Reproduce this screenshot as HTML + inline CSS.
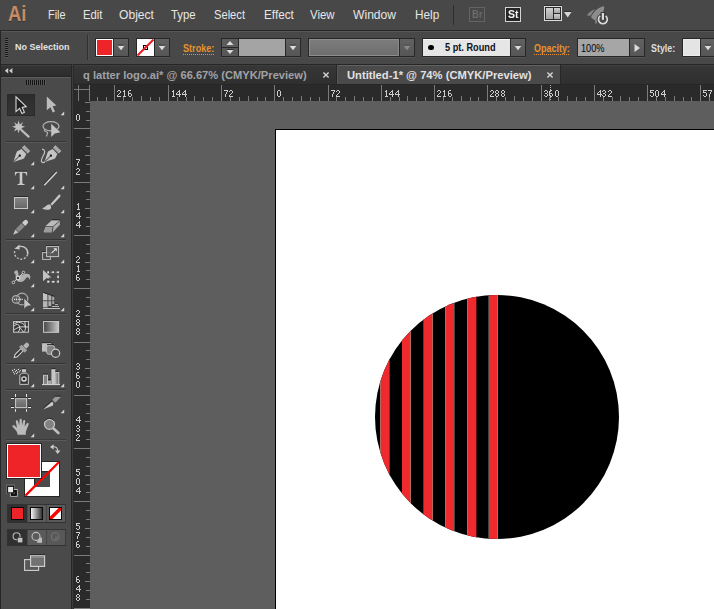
<!DOCTYPE html>
<html>
<head>
<meta charset="utf-8">
<title>Ai</title>
<style>
html,body{margin:0;padding:0;}
body{width:714px;height:609px;overflow:hidden;background:#5e5e5e;font-family:"Liberation Sans",sans-serif;position:relative;}
.abs{position:absolute;}
.t{position:absolute;white-space:nowrap;transform-origin:0 0;line-height:1;}
#menubar{left:0;top:0;width:714px;height:30px;background:#464646;}
#menuline{left:0;top:30px;width:714px;height:1px;background:#2e2e2e;}
#ctrlbar{left:0;top:31px;width:714px;height:32px;background:#474747;}
#ctrlline{left:0;top:63px;width:714px;height:1px;background:#2b2b2b;}
#tabbar{left:73px;top:64px;width:641px;height:21px;background:#3a3a3a;}
.menu{color:#e4e4e4;font-size:13px;top:8px;}
#toolbar{left:0;top:64px;width:71px;height:545px;background:#474747;}
#hruler{left:74px;top:85px;width:640px;height:16px;background:#2a2a2a;overflow:hidden;}
#vruler{left:74px;top:101px;width:16px;height:508px;background:#2a2a2a;overflow:hidden;}
.tk{position:absolute;background:#7c7c7c;}
.rl{position:absolute;will-change:transform;color:#d2d2d2;font-size:10.0px;line-height:9px;letter-spacing:-0.1px;white-space:nowrap;}
#canvas{left:90px;top:101px;width:624px;height:508px;background:#5e5e5e;overflow:hidden;}
#artboard{left:275px;top:129px;width:500px;height:600px;background:#fff;border:1px solid #000;box-sizing:border-box;}
</style>
</head>
<body>
<div class="abs" id="canvas"></div>
<div class="abs" id="artboard"></div>
<svg class="abs" style="left:0;top:0" width="714" height="609" viewBox="0 0 714 609">
  <defs><clipPath id="cc"><circle cx="497" cy="417" r="122"/></clipPath></defs>
  <circle cx="497" cy="417" r="122" fill="#000"/>
  <g clip-path="url(#cc)" fill="#ee2a2e" shape-rendering="crispEdges">
    <rect x="381" y="290" width="8" height="260"/>
    <rect x="402" y="290" width="8" height="260"/>
    <rect x="424" y="290" width="8" height="260"/>
    <rect x="446" y="290" width="8" height="260"/>
    <rect x="468" y="290" width="8" height="260"/>
    <rect x="489" y="290" width="8" height="260"/>
    <g fill="#b46a5a">
      <rect x="380" y="290" width="1" height="260"/>
      <rect x="410" y="290" width="1" height="260"/>
      <rect x="432" y="290" width="1" height="260"/>
      <rect x="445" y="290" width="1" height="260"/>
      <rect x="467" y="290" width="1" height="260"/>
      <rect x="497" y="290" width="1" height="260"/>
    </g>
    <g fill="#46443c">
      <rect x="389" y="290" width="1" height="260"/>
      <rect x="423" y="290" width="1" height="260"/>
      <rect x="454" y="290" width="1" height="260"/>
      <rect x="488" y="290" width="1" height="260"/>
    </g>
    <rect x="476" y="290" width="1" height="260" fill="#5a1012"/>
  </g>
</svg>
<div class="abs" id="hruler">
<div class="tk" style="left:5px;top:12px;width:1px;height:4px"></div>
<div class="tk" style="left:14px;top:11px;width:1px;height:5px"></div>
<div class="tk" style="left:23px;top:12px;width:1px;height:4px"></div>
<div class="tk" style="left:32px;top:12px;width:1px;height:4px"></div>
<div class="tk" style="left:40px;top:0;width:1px;height:16px"></div>
<div class="tk" style="left:49px;top:12px;width:1px;height:4px"></div>
<div class="tk" style="left:58px;top:12px;width:1px;height:4px"></div>
<div class="tk" style="left:67px;top:11px;width:1px;height:5px"></div>
<div class="tk" style="left:76px;top:12px;width:1px;height:4px"></div>
<div class="tk" style="left:85px;top:12px;width:1px;height:4px"></div>
<div class="tk" style="left:94px;top:0;width:1px;height:16px"></div>
<div class="tk" style="left:103px;top:12px;width:1px;height:4px"></div>
<div class="tk" style="left:112px;top:12px;width:1px;height:4px"></div>
<div class="tk" style="left:120px;top:11px;width:1px;height:5px"></div>
<div class="tk" style="left:129px;top:12px;width:1px;height:4px"></div>
<div class="tk" style="left:138px;top:12px;width:1px;height:4px"></div>
<div class="tk" style="left:147px;top:0;width:1px;height:16px"></div>
<div class="tk" style="left:156px;top:12px;width:1px;height:4px"></div>
<div class="tk" style="left:165px;top:12px;width:1px;height:4px"></div>
<div class="tk" style="left:174px;top:11px;width:1px;height:5px"></div>
<div class="tk" style="left:183px;top:12px;width:1px;height:4px"></div>
<div class="tk" style="left:191px;top:12px;width:1px;height:4px"></div>
<div class="tk" style="left:200px;top:0;width:1px;height:16px"></div>
<div class="tk" style="left:209px;top:12px;width:1px;height:4px"></div>
<div class="tk" style="left:218px;top:12px;width:1px;height:4px"></div>
<div class="tk" style="left:227px;top:11px;width:1px;height:5px"></div>
<div class="tk" style="left:236px;top:12px;width:1px;height:4px"></div>
<div class="tk" style="left:245px;top:12px;width:1px;height:4px"></div>
<div class="tk" style="left:254px;top:0;width:1px;height:16px"></div>
<div class="tk" style="left:262px;top:12px;width:1px;height:4px"></div>
<div class="tk" style="left:271px;top:12px;width:1px;height:4px"></div>
<div class="tk" style="left:280px;top:11px;width:1px;height:5px"></div>
<div class="tk" style="left:289px;top:12px;width:1px;height:4px"></div>
<div class="tk" style="left:298px;top:12px;width:1px;height:4px"></div>
<div class="tk" style="left:307px;top:0;width:1px;height:16px"></div>
<div class="tk" style="left:316px;top:12px;width:1px;height:4px"></div>
<div class="tk" style="left:325px;top:12px;width:1px;height:4px"></div>
<div class="tk" style="left:333px;top:11px;width:1px;height:5px"></div>
<div class="tk" style="left:342px;top:12px;width:1px;height:4px"></div>
<div class="tk" style="left:351px;top:12px;width:1px;height:4px"></div>
<div class="tk" style="left:360px;top:0;width:1px;height:16px"></div>
<div class="tk" style="left:369px;top:12px;width:1px;height:4px"></div>
<div class="tk" style="left:378px;top:12px;width:1px;height:4px"></div>
<div class="tk" style="left:387px;top:11px;width:1px;height:5px"></div>
<div class="tk" style="left:396px;top:12px;width:1px;height:4px"></div>
<div class="tk" style="left:404px;top:12px;width:1px;height:4px"></div>
<div class="tk" style="left:413px;top:0;width:1px;height:16px"></div>
<div class="tk" style="left:422px;top:12px;width:1px;height:4px"></div>
<div class="tk" style="left:431px;top:12px;width:1px;height:4px"></div>
<div class="tk" style="left:440px;top:11px;width:1px;height:5px"></div>
<div class="tk" style="left:449px;top:12px;width:1px;height:4px"></div>
<div class="tk" style="left:458px;top:12px;width:1px;height:4px"></div>
<div class="tk" style="left:467px;top:0;width:1px;height:16px"></div>
<div class="tk" style="left:475px;top:12px;width:1px;height:4px"></div>
<div class="tk" style="left:484px;top:12px;width:1px;height:4px"></div>
<div class="tk" style="left:493px;top:11px;width:1px;height:5px"></div>
<div class="tk" style="left:502px;top:12px;width:1px;height:4px"></div>
<div class="tk" style="left:511px;top:12px;width:1px;height:4px"></div>
<div class="tk" style="left:520px;top:0;width:1px;height:16px"></div>
<div class="tk" style="left:529px;top:12px;width:1px;height:4px"></div>
<div class="tk" style="left:538px;top:12px;width:1px;height:4px"></div>
<div class="tk" style="left:546px;top:11px;width:1px;height:5px"></div>
<div class="tk" style="left:555px;top:12px;width:1px;height:4px"></div>
<div class="tk" style="left:564px;top:12px;width:1px;height:4px"></div>
<div class="tk" style="left:573px;top:0;width:1px;height:16px"></div>
<div class="tk" style="left:582px;top:12px;width:1px;height:4px"></div>
<div class="tk" style="left:591px;top:12px;width:1px;height:4px"></div>
<div class="tk" style="left:600px;top:11px;width:1px;height:5px"></div>
<div class="tk" style="left:609px;top:12px;width:1px;height:4px"></div>
<div class="tk" style="left:617px;top:12px;width:1px;height:4px"></div>
<div class="tk" style="left:626px;top:0;width:1px;height:16px"></div>
<div class="tk" style="left:635px;top:12px;width:1px;height:4px"></div>
</div>
<div class="abs" id="vruler">
<div class="tk" style="top:1px;left:11px;height:1px;width:5px"></div>
<div class="tk" style="top:10px;left:12px;height:1px;width:4px"></div>
<div class="tk" style="top:19px;left:12px;height:1px;width:4px"></div>
<div class="tk" style="top:27px;left:0;height:1px;width:16px"></div>
<div class="tk" style="top:36px;left:12px;height:1px;width:4px"></div>
<div class="tk" style="top:45px;left:12px;height:1px;width:4px"></div>
<div class="tk" style="top:54px;left:11px;height:1px;width:5px"></div>
<div class="tk" style="top:63px;left:12px;height:1px;width:4px"></div>
<div class="tk" style="top:72px;left:12px;height:1px;width:4px"></div>
<div class="tk" style="top:81px;left:0;height:1px;width:16px"></div>
<div class="tk" style="top:90px;left:12px;height:1px;width:4px"></div>
<div class="tk" style="top:98px;left:12px;height:1px;width:4px"></div>
<div class="tk" style="top:107px;left:11px;height:1px;width:5px"></div>
<div class="tk" style="top:116px;left:12px;height:1px;width:4px"></div>
<div class="tk" style="top:125px;left:12px;height:1px;width:4px"></div>
<div class="tk" style="top:134px;left:0;height:1px;width:16px"></div>
<div class="tk" style="top:143px;left:12px;height:1px;width:4px"></div>
<div class="tk" style="top:152px;left:12px;height:1px;width:4px"></div>
<div class="tk" style="top:161px;left:11px;height:1px;width:5px"></div>
<div class="tk" style="top:169px;left:12px;height:1px;width:4px"></div>
<div class="tk" style="top:178px;left:12px;height:1px;width:4px"></div>
<div class="tk" style="top:187px;left:0;height:1px;width:16px"></div>
<div class="tk" style="top:196px;left:12px;height:1px;width:4px"></div>
<div class="tk" style="top:205px;left:12px;height:1px;width:4px"></div>
<div class="tk" style="top:214px;left:11px;height:1px;width:5px"></div>
<div class="tk" style="top:223px;left:12px;height:1px;width:4px"></div>
<div class="tk" style="top:232px;left:12px;height:1px;width:4px"></div>
<div class="tk" style="top:241px;left:0;height:1px;width:16px"></div>
<div class="tk" style="top:249px;left:12px;height:1px;width:4px"></div>
<div class="tk" style="top:258px;left:12px;height:1px;width:4px"></div>
<div class="tk" style="top:267px;left:11px;height:1px;width:5px"></div>
<div class="tk" style="top:276px;left:12px;height:1px;width:4px"></div>
<div class="tk" style="top:285px;left:12px;height:1px;width:4px"></div>
<div class="tk" style="top:294px;left:0;height:1px;width:16px"></div>
<div class="tk" style="top:303px;left:12px;height:1px;width:4px"></div>
<div class="tk" style="top:312px;left:12px;height:1px;width:4px"></div>
<div class="tk" style="top:320px;left:11px;height:1px;width:5px"></div>
<div class="tk" style="top:329px;left:12px;height:1px;width:4px"></div>
<div class="tk" style="top:338px;left:12px;height:1px;width:4px"></div>
<div class="tk" style="top:347px;left:0;height:1px;width:16px"></div>
<div class="tk" style="top:356px;left:12px;height:1px;width:4px"></div>
<div class="tk" style="top:365px;left:12px;height:1px;width:4px"></div>
<div class="tk" style="top:374px;left:11px;height:1px;width:5px"></div>
<div class="tk" style="top:383px;left:12px;height:1px;width:4px"></div>
<div class="tk" style="top:391px;left:12px;height:1px;width:4px"></div>
<div class="tk" style="top:400px;left:0;height:1px;width:16px"></div>
<div class="tk" style="top:409px;left:12px;height:1px;width:4px"></div>
<div class="tk" style="top:418px;left:12px;height:1px;width:4px"></div>
<div class="tk" style="top:427px;left:11px;height:1px;width:5px"></div>
<div class="tk" style="top:436px;left:12px;height:1px;width:4px"></div>
<div class="tk" style="top:445px;left:12px;height:1px;width:4px"></div>
<div class="tk" style="top:454px;left:0;height:1px;width:16px"></div>
<div class="tk" style="top:462px;left:12px;height:1px;width:4px"></div>
<div class="tk" style="top:471px;left:12px;height:1px;width:4px"></div>
<div class="tk" style="top:480px;left:11px;height:1px;width:5px"></div>
<div class="tk" style="top:489px;left:12px;height:1px;width:4px"></div>
<div class="tk" style="top:498px;left:12px;height:1px;width:4px"></div>
<div class="tk" style="top:507px;left:0;height:1px;width:16px"></div>
</div>
<svg class="abs" style="left:0;top:0" width="714" height="609" viewBox="0 0 714 609" fill="#cdcdcd" shape-rendering="crispEdges"><defs><symbol id="d0" overflow="visible"><path d="M1 0h2v1h-2zM0 1h1v1h-1zM3 1h1v1h-1zM0 2h1v1h-1zM3 2h1v1h-1zM0 3h1v1h-1zM3 3h1v1h-1zM0 4h1v1h-1zM3 4h1v1h-1zM0 5h1v1h-1zM3 5h1v1h-1zM1 6h2v1h-2z"/></symbol><symbol id="d1" overflow="visible"><path d="M2 0h1v1h-1zM1 1h2v1h-2zM2 2h1v1h-1zM2 3h1v1h-1zM2 4h1v1h-1zM2 5h1v1h-1zM1 6h3v1h-3z"/></symbol><symbol id="d2" overflow="visible"><path d="M1 0h2v1h-2zM0 1h1v1h-1zM3 1h1v1h-1zM3 2h1v1h-1zM2 3h1v1h-1zM1 4h1v1h-1zM0 5h1v1h-1zM0 6h4v1h-4z"/></symbol><symbol id="d3" overflow="visible"><path d="M1 0h2v1h-2zM0 1h1v1h-1zM3 1h1v1h-1zM3 2h1v1h-1zM1 3h2v1h-2zM3 4h1v1h-1zM0 5h1v1h-1zM3 5h1v1h-1zM1 6h2v1h-2z"/></symbol><symbol id="d4" overflow="visible"><path d="M3 0h1v1h-1zM2 1h2v1h-2zM1 2h1v1h-1zM3 2h1v1h-1zM0 3h1v1h-1zM3 3h1v1h-1zM0 4h5v1h-5zM3 5h1v1h-1zM3 6h1v1h-1z"/></symbol><symbol id="d5" overflow="visible"><path d="M0 0h4v1h-4zM0 1h1v1h-1zM0 2h3v1h-3zM3 3h1v1h-1zM3 4h1v1h-1zM0 5h1v1h-1zM3 5h1v1h-1zM1 6h2v1h-2z"/></symbol><symbol id="d6" overflow="visible"><path d="M1 0h2v1h-2zM0 1h1v1h-1zM0 2h1v1h-1zM0 3h3v1h-3zM0 4h1v1h-1zM3 4h1v1h-1zM0 5h1v1h-1zM3 5h1v1h-1zM1 6h2v1h-2z"/></symbol><symbol id="d7" overflow="visible"><path d="M0 0h4v1h-4zM3 1h1v1h-1zM2 2h1v1h-1zM2 3h1v1h-1zM1 4h1v1h-1zM1 5h1v1h-1zM1 6h1v1h-1z"/></symbol><symbol id="d8" overflow="visible"><path d="M1 0h2v1h-2zM0 1h1v1h-1zM3 1h1v1h-1zM0 2h1v1h-1zM3 2h1v1h-1zM1 3h2v1h-2zM0 4h1v1h-1zM3 4h1v1h-1zM0 5h1v1h-1zM3 5h1v1h-1zM1 6h2v1h-2z"/></symbol></defs><use href="#d2" x="117" y="90"/><use href="#d1" x="122" y="90"/><use href="#d6" x="128" y="90"/><use href="#d1" x="171" y="90"/><use href="#d4" x="176" y="90"/><use href="#d4" x="182" y="90"/><use href="#d7" x="224" y="90"/><use href="#d2" x="229" y="90"/><use href="#d0" x="277" y="90"/><use href="#d7" x="331" y="90"/><use href="#d2" x="336" y="90"/><use href="#d1" x="384" y="90"/><use href="#d4" x="389" y="90"/><use href="#d4" x="395" y="90"/><use href="#d2" x="437" y="90"/><use href="#d1" x="442" y="90"/><use href="#d6" x="448" y="90"/><use href="#d2" x="490" y="90"/><use href="#d8" x="495" y="90"/><use href="#d8" x="501" y="90"/><use href="#d3" x="544" y="90"/><use href="#d6" x="549" y="90"/><use href="#d0" x="555" y="90"/><use href="#d4" x="597" y="90"/><use href="#d3" x="602" y="90"/><use href="#d2" x="608" y="90"/><use href="#d5" x="650" y="90"/><use href="#d0" x="655" y="90"/><use href="#d4" x="661" y="90"/><use href="#d5" x="703" y="90"/><use href="#d7" x="708" y="90"/><use href="#d6" x="714" y="90"/><use href="#d0" x="76" y="114"/><use href="#d7" x="76" y="159"/><use href="#d2" x="76" y="168"/><use href="#d1" x="76" y="203"/><use href="#d4" x="76" y="212"/><use href="#d4" x="76" y="221"/><use href="#d2" x="76" y="256"/><use href="#d1" x="76" y="265"/><use href="#d6" x="76" y="274"/><use href="#d2" x="76" y="310"/><use href="#d8" x="76" y="319"/><use href="#d8" x="76" y="328"/><use href="#d3" x="76" y="363"/><use href="#d6" x="76" y="372"/><use href="#d0" x="76" y="381"/><use href="#d4" x="76" y="416"/><use href="#d3" x="76" y="425"/><use href="#d2" x="76" y="434"/><use href="#d5" x="76" y="469"/><use href="#d0" x="76" y="478"/><use href="#d4" x="76" y="487"/><use href="#d5" x="76" y="523"/><use href="#d7" x="76" y="532"/><use href="#d6" x="76" y="541"/><use href="#d6" x="76" y="576"/><use href="#d4" x="76" y="585"/><use href="#d8" x="76" y="594"/></svg>
<div class="abs" style="left:550px;top:85px;width:1px;height:16px;background:repeating-linear-gradient(to bottom,#b4b4b4 0,#b4b4b4 1px,transparent 1px,transparent 2px)"></div>
<div class="abs" style="left:74px;top:85px;width:16px;height:16px;background:#2a2a2a"></div>
<div class="abs" style="left:74px;top:89px;width:16px;height:1px;background:#7a7a7a"></div>
<div class="abs" style="left:78px;top:85px;width:1px;height:16px;background:#7a7a7a"></div>
<div class="abs" style="left:89px;top:85px;width:1px;height:16px;background:#7a7a7a"></div>
<div class="abs" style="left:0px;top:0px;width:714px;height:30px;background:#484848;"></div>
<div class="abs" style="left:0px;top:30px;width:714px;height:1px;background:#262626;"></div>
<div class="t" style="left:7.8px;top:2.8px;font-size:21.9px;color:#c98b62;font-weight:bold;transform:scaleX(0.840);text-shadow:0 1px 0 rgba(0,0,0,0.3);">Ai</div>
<div class="t" style="left:47.5px;top:9.0px;font-size:12.6px;color:#e6e6e6;transform:scaleX(0.862);">File</div>
<div class="t" style="left:82.5px;top:9.0px;font-size:12.6px;color:#e6e6e6;transform:scaleX(0.898);">Edit</div>
<div class="t" style="left:119.2px;top:9.0px;font-size:12.6px;color:#e6e6e6;transform:scaleX(0.961);">Object</div>
<div class="t" style="left:171.2px;top:9.0px;font-size:12.6px;color:#e6e6e6;transform:scaleX(0.904);">Type</div>
<div class="t" style="left:214.2px;top:9.0px;font-size:12.6px;color:#e6e6e6;transform:scaleX(0.885);">Select</div>
<div class="t" style="left:263.5px;top:9.0px;font-size:12.6px;color:#e6e6e6;transform:scaleX(0.932);">Effect</div>
<div class="t" style="left:310.1px;top:9.0px;font-size:12.6px;color:#e6e6e6;transform:scaleX(0.908);">View</div>
<div class="t" style="left:353.3px;top:9.0px;font-size:12.6px;color:#e6e6e6;transform:scaleX(0.962);">Window</div>
<div class="t" style="left:414.7px;top:9.0px;font-size:12.6px;color:#e6e6e6;transform:scaleX(0.934);">Help</div>
<div class="abs" style="left:453px;top:5px;width:1px;height:20px;background:#2e2e2e;"></div>
<div class="abs" style="left:469px;top:7px;width:16px;height:15px;box-sizing:border-box;border:1px solid #646464;"></div>
<div class="t" style="left:472.0px;top:10.1px;font-size:10px;color:#6c6c6c;font-weight:bold;transform:scaleX(0.945);will-change:transform;">Br</div>
<div class="abs" style="left:505px;top:7px;width:16px;height:15px;box-sizing:border-box;border:1px solid #d4d4d4;background:#262626"></div>
<div class="t" style="left:508.0px;top:10.1px;font-size:10px;color:#f4f4f4;font-weight:bold;transform:scaleX(1.050);will-change:transform;">St</div>
<svg class="abs" style="left:540px;top:2px" width="36" height="24" viewBox="540 2 36 24">
<defs><linearGradient id="pg" x1="0" y1="0" x2="0" y2="1"><stop offset="0" stop-color="#cfcfcf"/><stop offset="1" stop-color="#a4a4a4"/></linearGradient></defs>
<rect x="544" y="5" width="18" height="1" fill="#2c2c2c"/>
<rect x="544.5" y="6.5" width="17" height="14" fill="#2a2a2a" stroke="#dcdcdc" stroke-width="1"/>
<rect x="546" y="8" width="7" height="11" fill="url(#pg)"/>
<rect x="554" y="8" width="6" height="5" fill="url(#pg)"/>
<rect x="554" y="14" width="6" height="5" fill="url(#pg)"/>
<path d="M564 11 L571.5 11 L567.75 16.5 Z" fill="#2c2c2c"/>
<path d="M564 12 L571.5 12 L567.75 17.5 Z" fill="#d6d6d6"/>
</svg>
<svg class="abs" style="left:584px;top:2px" width="30" height="26" viewBox="584 2 30 26">
<path d="M604.2 6.3 C599.5 6.6 593.5 11 591 17.4 L594.6 20.2 C599.5 18.5 604.6 12.5 604.2 6.3 Z" fill="#8c8c8c"/>
<path d="M595.2 9.4 C591.5 10 588.5 12.5 586.8 15.4 L590.8 15.8 C591.6 13.5 592.8 11.6 595.2 9.4 Z" fill="#858585"/>
<path d="M594.9 19.6 L596.9 19 L597.8 21.8 L595.6 24.2 Z" fill="#858585"/>
<circle cx="602.9" cy="19.5" r="6.3" fill="#484848"/>
<rect x="600.7" y="12" width="4.4" height="8" fill="#3a3a3a"/>
<path d="M600.2 15.9 A4.4 4.4 0 1 0 605.6 15.9" fill="none" stroke="#d8d8d8" stroke-width="1.7" stroke-linecap="butt"/>
<rect x="601.8" y="13" width="2.2" height="6.8" fill="#dcdcdc"/>
</svg>
<div class="abs" style="left:0px;top:31px;width:714px;height:33px;background:#484848;"></div>
<div class="abs" style="left:0px;top:31px;width:714px;height:1px;background:#585858;"></div>
<div class="abs" style="left:0px;top:31px;width:1px;height:33px;background:#262626;"></div>
<div class="abs" style="left:0px;top:64px;width:714px;height:1px;background:#262626;"></div>
<div class="abs" style="left:5px;top:38px;width:3px;height:20px;background:repeating-linear-gradient(to bottom,#161616 0,#161616 1px,#5a5a5a 1px,#5a5a5a 2px)"></div>
<div class="t" style="left:15.1px;top:41.9px;font-size:9.9px;color:#e2e2e2;font-weight:bold;transform:scaleX(0.909);">No Selection</div>
<div class="abs" style="left:87px;top:35px;width:1px;height:25px;background:#303030;"></div>
<div class="abs" style="left:88px;top:35px;width:1px;height:25px;background:#525252;"></div>
<div class="abs" style="left:95px;top:38px;width:34px;height:19px;background:#272727;"></div>
<div class="abs" style="left:95px;top:57px;width:34px;height:1px;background:#555555;"></div>
<div class="abs" style="left:96px;top:39px;width:17px;height:17px;background:#ffffff;"></div>
<div class="abs" style="left:97px;top:40px;width:15px;height:15px;background:#ee2429;"></div>
<div class="abs" style="left:114px;top:39px;width:14px;height:17px;background:#5a5a5a;background:linear-gradient(#626262,#565656);"></div>
<svg class="abs" style="left:115px;top:42px" width="12" height="12" viewBox="-6 -6 12 12"><path d="M-3.5 -3.25 L3.5 -3.25 L0 1.25 Z" fill="#2a2a2a"/><path d="M-3.5 -2.25 L3.5 -2.25 L0 2.25 Z" fill="#dcdcdc"/></svg>
<div class="abs" style="left:136px;top:38px;width:34px;height:19px;background:#272727;"></div>
<div class="abs" style="left:136px;top:57px;width:34px;height:1px;background:#555555;"></div>
<div class="abs" style="left:137px;top:39px;width:17px;height:17px;background:#ffffff;"></div>
<svg class="abs" style="left:137px;top:39px" width="17" height="17" viewBox="0 0 17 17"><rect x="6.5" y="6.5" width="4" height="4" fill="#fff" stroke="#000" stroke-width="1"/><path d="M0.5 16.5 L16.5 0.5" stroke="#ed1c24" stroke-width="2"/></svg>
<div class="abs" style="left:155px;top:39px;width:14px;height:17px;background:#5a5a5a;background:linear-gradient(#626262,#565656);"></div>
<svg class="abs" style="left:156px;top:42px" width="12" height="12" viewBox="-6 -6 12 12"><path d="M-3.5 -3.25 L3.5 -3.25 L0 1.25 Z" fill="#2a2a2a"/><path d="M-3.5 -2.25 L3.5 -2.25 L0 2.25 Z" fill="#dcdcdc"/></svg>
<div class="t" style="left:183.0px;top:43.4px;font-size:10.6px;color:#e8922e;font-weight:bold;transform:scaleX(0.860);">Stroke:</div>
<div class="abs" style="left:183px;top:54px;width:31px;height:1px;background:repeating-linear-gradient(to right,#e8922e 0,#e8922e 1px,transparent 1px,transparent 2px)"></div>
<div class="abs" style="left:221px;top:38px;width:80px;height:19px;background:#272727;"></div>
<div class="abs" style="left:221px;top:57px;width:80px;height:1px;background:#555555;"></div>
<div class="abs" style="left:222px;top:39px;width:16px;height:8px;background:#5c5c5c;"></div>
<div class="abs" style="left:222px;top:48px;width:16px;height:8px;background:#585858;"></div>
<svg class="abs" style="left:224px;top:37px" width="12" height="12" viewBox="-6 -6 12 12"><path d="M-3.5 2.0 L3.5 2.0 L0 -2.0 Z" fill="#dcdcdc"/></svg>
<svg class="abs" style="left:224px;top:46px" width="12" height="12" viewBox="-6 -6 12 12"><path d="M-3.5 -3.0 L3.5 -3.0 L0 1.0 Z" fill="#2a2a2a"/><path d="M-3.5 -2.0 L3.5 -2.0 L0 2.0 Z" fill="#dcdcdc"/></svg>
<div class="abs" style="left:239px;top:39px;width:46px;height:17px;background:#a4a4a4;"></div>
<div class="abs" style="left:286px;top:39px;width:14px;height:17px;background:#5a5a5a;background:linear-gradient(#626262,#565656);"></div>
<svg class="abs" style="left:287px;top:41.5px" width="12" height="12" viewBox="-6 -6 12 12"><path d="M-3.5 -3.25 L3.5 -3.25 L0 1.25 Z" fill="#2a2a2a"/><path d="M-3.5 -2.25 L3.5 -2.25 L0 2.25 Z" fill="#dcdcdc"/></svg>
<div class="abs" style="left:308px;top:38px;width:107px;height:19px;background:#272727;"></div>
<div class="abs" style="left:308px;top:57px;width:107px;height:1px;background:#555555;"></div>
<div class="abs" style="left:309px;top:39px;width:90px;height:17px;background:#747474;background:linear-gradient(#7c7c7c,#6e6e6e);box-sizing:border-box;border:1px solid #8c8c8c;"></div>
<div class="abs" style="left:400px;top:39px;width:14px;height:17px;background:#585858;background:linear-gradient(#626262,#565656);"></div>
<svg class="abs" style="left:401px;top:42px" width="12" height="12" viewBox="-6 -6 12 12"><path d="M-3.5 -3.25 L3.5 -3.25 L0 1.25 Z" fill="#444"/><path d="M-3.5 -2.25 L3.5 -2.25 L0 2.25 Z" fill="#8a8a8a"/></svg>
<div class="abs" style="left:422px;top:38px;width:104px;height:19px;background:#272727;"></div>
<div class="abs" style="left:422px;top:57px;width:104px;height:1px;background:#555555;"></div>
<div class="abs" style="left:423px;top:39px;width:87px;height:17px;background:#e6e6e6;box-sizing:border-box;border-top:1px solid #fafafa;"></div>
<div class="abs" style="left:428.4px;top:44.6px;width:5.4px;height:5.4px;border-radius:50%;background:#000"></div>
<div class="t" style="left:444.6px;top:43.2px;font-size:10.4px;color:#101018;font-weight:bold;transform:scaleX(0.885);">5 pt. Round</div>
<div class="abs" style="left:511px;top:39px;width:14px;height:17px;background:#5a5a5a;background:linear-gradient(#626262,#565656);"></div>
<svg class="abs" style="left:512px;top:42px" width="12" height="12" viewBox="-6 -6 12 12"><path d="M-3.5 -3.25 L3.5 -3.25 L0 1.25 Z" fill="#2a2a2a"/><path d="M-3.5 -2.25 L3.5 -2.25 L0 2.25 Z" fill="#dcdcdc"/></svg>
<div class="t" style="left:534.4px;top:43.4px;font-size:10.6px;color:#e8922e;font-weight:bold;transform:scaleX(0.846);">Opacity:</div>
<div class="abs" style="left:534px;top:54px;width:36px;height:1px;background:repeating-linear-gradient(to right,#e8922e 0,#e8922e 1px,transparent 1px,transparent 2px)"></div>
<div class="abs" style="left:577px;top:38px;width:68px;height:19px;background:#272727;"></div>
<div class="abs" style="left:577px;top:57px;width:68px;height:1px;background:#555555;"></div>
<div class="abs" style="left:578px;top:39px;width:51px;height:17px;background:#a6a6a6;"></div>
<div class="t" style="left:580.9px;top:42.6px;font-size:10.6px;color:#050505;transform:scaleX(0.867);">100%</div>
<div class="abs" style="left:630px;top:39px;width:14px;height:17px;background:#5a5a5a;background:linear-gradient(#626262,#565656);"></div>
<svg class="abs" style="left:631px;top:41.5px" width="12" height="12" viewBox="-6 -6 12 12"><path d="M-2.5 -4 L3 0 L-2.5 4 Z" fill="#dcdcdc"/></svg>
<div class="t" style="left:650.8px;top:43.4px;font-size:10.6px;color:#dedede;font-weight:bold;transform:scaleX(0.838);">Style:</div>
<div class="abs" style="left:682px;top:38px;width:34px;height:19px;background:#272727;"></div>
<div class="abs" style="left:682px;top:57px;width:34px;height:1px;background:#555555;"></div>
<div class="abs" style="left:683px;top:39px;width:17px;height:17px;background:#e4e4e4;box-sizing:border-box;border:1px solid #ececec;"></div>
<div class="abs" style="left:701px;top:39px;width:14px;height:17px;background:#5a5a5a;background:linear-gradient(#626262,#565656);"></div>
<svg class="abs" style="left:702px;top:42px" width="12" height="12" viewBox="-6 -6 12 12"><path d="M-3.5 -3.25 L3.5 -3.25 L0 1.25 Z" fill="#2a2a2a"/><path d="M-3.5 -2.25 L3.5 -2.25 L0 2.25 Z" fill="#dcdcdc"/></svg>
<div class="abs" style="left:73px;top:65px;width:641px;height:19px;background:#333333;background:linear-gradient(#373737,#2f2f2f);"></div>
<div class="abs" style="left:73px;top:65px;width:641px;height:1px;background:#3e3e3e;"></div>
<div class="abs" style="left:73px;top:84px;width:641px;height:1px;background:#262626;"></div>
<div class="abs" style="left:337px;top:65px;width:223px;height:19px;background:#4a4a4a;"></div>
<div class="abs" style="left:337px;top:65px;width:223px;height:1px;background:#626262;"></div>
<div class="abs" style="left:337px;top:65px;width:1px;height:19px;background:#585858;"></div>
<div class="abs" style="left:336px;top:65px;width:1px;height:19px;background:#262626;"></div>
<div class="abs" style="left:560px;top:65px;width:1px;height:19px;background:#262626;"></div>
<div class="t" style="left:82.7px;top:69.9px;font-size:11.0px;color:#a0a2a6;font-weight:bold;transform:scaleX(1.012);">q latter logo.ai* @ 66.67% (CMYK/Preview)</div>
<div class="t" style="left:346.5px;top:69.9px;font-size:11.0px;color:#e2e2e2;font-weight:bold;transform:scaleX(1.018);">Untitled-1* @ 74% (CMYK/Preview)</div>
<svg class="abs" style="left:321px;top:69.8px" width="10" height="10" viewBox="-5 -5 10 10"><path d="M-2.6 -2.6 L2.6 2.6 M2.6 -2.6 L-2.6 2.6" stroke="#d6d6d6" stroke-width="1.35"/></svg>
<svg class="abs" style="left:545px;top:69.8px" width="10" height="10" viewBox="-5 -5 10 10"><path d="M-2.6 -2.6 L2.6 2.6 M2.6 -2.6 L-2.6 2.6" stroke="#d6d6d6" stroke-width="1.35"/></svg>
<div class="abs" style="left:0px;top:64px;width:71px;height:545px;background:#4a4a4a;"></div>
<div class="abs" style="left:0px;top:64px;width:1px;height:545px;background:#262626;"></div>
<div class="abs" style="left:0px;top:64px;width:74px;height:1px;background:#262626;"></div>
<div class="abs" style="left:1px;top:65px;width:70px;height:11px;background:#333333;background:linear-gradient(#353535,#2c2c2c);"></div>
<div class="abs" style="left:1px;top:65px;width:70px;height:1px;background:#3e3e3e;"></div>
<div class="abs" style="left:0px;top:76px;width:71px;height:1px;background:#262626;"></div>
<div class="abs" style="left:1px;top:77px;width:70px;height:1px;background:#5c5c5c;"></div>
<div class="abs" style="left:71px;top:64px;width:1px;height:545px;background:#262626;"></div>
<div class="abs" style="left:72px;top:64px;width:1px;height:545px;background:#3d3d3d;"></div>
<div class="abs" style="left:73px;top:64px;width:1px;height:545px;background:#2a2a2a;"></div>
<div class="abs" style="left:26px;top:80px;width:20px;height:5px;background:repeating-linear-gradient(to right,#141414 0,#141414 1px,#565656 1px,#565656 2px)"></div>
<div class="abs" style="left:7px;top:94px;width:28px;height:22px;background:#2f2f2f;background:linear-gradient(#2c2c2c,#353535);box-shadow:inset 0 0 0 1px #2a2a2a;"></div>
<svg class="abs" style="left:0;top:64px" width="74" height="545" viewBox="0 64 74 545">
<path d="M8.2 68 L8.2 73.4 L4.8 70.7 Z M12.4 68 L12.4 73.4 L9 70.7 Z" fill="#cccccc"/>
<path d="M16 96.9 L16 111.6 L19.6 108.4 L22 113.4 L24.4 112.2 L22.2 107.4 L26.2 106.6 Z" fill="#1e1e1e" stroke="#d8d8d8" stroke-width="1.1" stroke-linejoin="miter"/>
<path d="M46.8 96.4 L46.8 110.2 L50.4 107.2 L52.8 112.4 L55 111.4 L52.6 106.2 L56.4 105.4 Z" fill="#bcbcbc"/>
<path d="M64.2 111.60000000000001 L64.2 115.2 L60.6 115.2 Z" fill="#d4d4d4"/>
<path d="M18.6 120.4 L19.8 124.4 L23.2 122 L21.4 125.6 L25.2 126.8 L21.4 128 L23.2 131.6 L19.8 129.4 L18.6 133.2 L17.4 129.4 L14 131.6 L15.8 128 L12 126.8 L15.8 125.6 L14 122 L17.4 124.4 Z" fill="#c2c2c2"/>
<path d="M21.6 130.2 L28.6 136.6" stroke="#bdbdbd" stroke-width="2.2" stroke-linecap="round"/>
<ellipse cx="51" cy="126.2" rx="8" ry="4.6" fill="none" stroke="#b4b4b4" stroke-width="1.2"/>
<path d="M44.4 129.5 C43.6 132.5 48.2 131 47.6 133.2 C47.2 134.6 46.2 135.4 46.8 136.6" fill="none" stroke="#b4b4b4" stroke-width="1.2"/>
<path d="M51.2 123.8 L51.2 137 L54.8 133.4 L60.4 132.2 Z" fill="#c4c4c4"/>
<rect x="6" y="141" width="60" height="1" fill="#343434"/>
<rect x="6" y="142" width="60" height="1" fill="#585858"/>
<g transform="translate(13.1 162.3) rotate(45)"><path d="M0 0 C-1.6 -4 -3.6 -7 -5 -10.4 L-3.4 -15.3 L3.4 -15.3 L5 -10.4 C3.6 -7 1.6 -4 0 0 Z" fill="#c4c4c4"/><rect x="-4" y="-20.1" width="8" height="3.6" fill="#b8b8b8"/><path d="M-2 -20.1 V-16.5 M0 -20.1 V-16.5 M2 -20.1 V-16.5" stroke="#6a6a6a" stroke-width="0.6"/><path d="M0 -0.5 L0 -9" stroke="#2e2e2e" stroke-width="0.9"/><circle cx="0" cy="-9.5" r="1.15" fill="#1c1c1c"/></g>
<path d="M34.2 161.6 L34.2 165.2 L30.6 165.2 Z" fill="#d4d4d4"/>
<g transform="translate(44.2 162.3) rotate(45)"><path d="M0 0 C-1.6 -4 -3.6 -7 -5 -10.4 L-3.4 -15.3 L3.4 -15.3 L5 -10.4 C3.6 -7 1.6 -4 0 0 Z" fill="#c4c4c4"/><rect x="-4" y="-20.1" width="8" height="3.6" fill="#b8b8b8"/><path d="M-2 -20.1 V-16.5 M0 -20.1 V-16.5 M2 -20.1 V-16.5" stroke="#6a6a6a" stroke-width="0.6"/><path d="M0 -0.5 L0 -9" stroke="#2e2e2e" stroke-width="0.9"/><circle cx="0" cy="-9.5" r="1.15" fill="#1c1c1c"/></g>
<path d="M42 149.2 C45.5 149.4 45 152.5 43.6 155 C42 158 40.4 160.6 41.8 162 C42.8 163 44.2 162.4 45 161.8" fill="none" stroke="#c0c0c0" stroke-width="1.2"/>
<path d="M15 171.6 H27 L27.2 175.6 H26.4 C26.2 173.8 25.4 172.8 23.6 172.8 H22.3 V182.6 C22.3 183.8 22.8 184.2 24.6 184.3 V185 H17.4 V184.3 C19.2 184.2 19.7 183.8 19.7 182.6 V172.8 H18.4 C16.6 172.8 15.8 173.8 15.6 175.6 H14.8 Z" fill="#cacaca"/>
<rect x="15" y="170.6" width="12" height="1" fill="#2e2e2e"/>
<path d="M34.2 185.6 L34.2 189.2 L30.6 189.2 Z" fill="#d4d4d4"/>
<path d="M43.8 184.6 L56.2 171.4" stroke="#2c2c2c" stroke-width="1.4"/>
<path d="M44.3 185.3 L56.8 172" stroke="#d4d4d4" stroke-width="1.4"/>
<path d="M64.2 185.6 L64.2 189.2 L60.6 189.2 Z" fill="#d4d4d4"/>
<defs><linearGradient id="rg" x1="0" y1="0" x2="0" y2="1"><stop offset="0" stop-color="#868686"/><stop offset="1" stop-color="#666"/></linearGradient><linearGradient id="gg" x1="0" y1="0" x2="1" y2="0"><stop offset="0" stop-color="#444"/><stop offset="1" stop-color="#c8c8c8"/></linearGradient><linearGradient id="wg" x1="0" y1="0" x2="1" y2="0"><stop offset="0" stop-color="#fff"/><stop offset="1" stop-color="#2a2a2a"/></linearGradient></defs>
<rect x="14" y="196" width="14" height="1" fill="#2a2a2a"/>
<rect x="14.5" y="197.5" width="13" height="11" fill="url(#rg)" stroke="#c8c8c8" stroke-width="1"/>
<path d="M34.2 209.6 L34.2 213.2 L30.6 213.2 Z" fill="#d4d4d4"/>
<path d="M59.9 194.6 C60.8 195.2 60.6 196.2 60 197 L52 205.6 L50.4 204.2 L58.4 195.2 C58.8 194.6 59.4 194.3 59.9 194.6 Z" fill="#c8c8c8"/>
<path d="M50 204.6 C47.6 204 46.4 205.6 45.4 206.6 C44.4 207.6 43.2 208 42 208.2 C44.4 209.8 47.6 210.2 49.6 209.6 C51.4 208.8 51.8 206.4 50 204.6 Z" fill="#c2c2c2"/>
<path d="M64.2 209.6 L64.2 213.2 L60.6 213.2 Z" fill="#d4d4d4"/>
<g transform="translate(13.1 234.8) rotate(45)"><path d="M0 0 L-2.2 -5.4 L2.2 -5.4 Z" fill="#c2c2c2"/><rect x="-2.2" y="-14" width="4.4" height="8" fill="#8a8a8a"/><path d="M-2.2 -14.8 L-2.2 -18 A2.2 2.2 0 0 1 2.2 -18 L2.2 -14.8 Z" fill="#cecece"/></g>
<path d="M34.2 233.6 L34.2 237.2 L30.6 237.2 Z" fill="#d4d4d4"/>
<path d="M51.8 220.2 L59.8 220.2 L53.2 226 L45.6 226 Z" fill="#bcbcbc"/>
<path d="M45.4 226.8 L52.6 226.8 L51.6 232.6 L44 232.6 Q43.4 232.4 43.6 231.6 Z" fill="#9c9c9c"/>
<path d="M53.6 226.6 L59.9 221 L59.9 224.8 L52.6 232.4 Z" fill="#acacac"/>
<rect x="52" y="219.2" width="8" height="1" fill="#2a2a2a"/>
<path d="M64.2 233.6 L64.2 237.2 L60.6 237.2 Z" fill="#d4d4d4"/>
<rect x="6" y="239" width="60" height="1" fill="#343434"/>
<rect x="6" y="240" width="60" height="1" fill="#585858"/>
<path d="M19.4 246.6 A6.7 6.7 0 0 1 27.6 254.6" fill="none" stroke="#c8c8c8" stroke-width="1.4"/>
<path d="M27.6 254.6 A6.7 6.7 0 1 1 15.2 249.6" fill="none" stroke="#c0c0c0" stroke-width="1.4" stroke-dasharray="2 1.6"/>
<path d="M14.4 248.8 L19.6 244.6 L19.6 249.4 Z" fill="#c8c8c8"/>
<path d="M34.2 259.59999999999997 L34.2 263.2 L30.6 263.2 Z" fill="#d4d4d4"/>
<rect x="46" y="245.2" width="13" height="1" fill="#2a2a2a"/>
<rect x="42" y="251.2" width="4" height="1" fill="#2a2a2a"/>
<rect x="42.6" y="252.6" width="7.8" height="6.8" fill="none" stroke="#bcbcbc" stroke-width="1"/>
<rect x="46.6" y="246.6" width="12" height="10" fill="#5a5a5a" fill-opacity="0.8" stroke="#c4c4c4" stroke-width="1"/>
<path d="M51.6 253 L56 248.8" stroke="#e0e0e0" stroke-width="1.1"/>
<path d="M53.4 248.2 L56.8 248.2 L56.8 251.6 Z" fill="#e0e0e0"/>
<path d="M64.2 259.59999999999997 L64.2 263.2 L60.6 263.2 Z" fill="#d4d4d4"/>
<path d="M14 272.9 C14.4 271 15.4 270.2 16.4 270.2 C17.6 270.2 18 271.4 18.2 272.6 C18.4 274 18.4 275.4 18.8 276.2 C20 275.4 21.4 274.8 22.8 274.5 C24.4 274 25.8 273.6 27.2 273.7 C28.6 273.8 29.6 274.4 30 275.6 C30.6 277.2 30.2 278.8 29.5 280.2 C29.4 279 29.2 278.2 28.6 277.8 C28 277.2 27.4 277 26.8 277.4 C26 278 25.4 279.2 24.4 280.2 C23.4 281.2 22.2 281.8 20.8 281.9 C19.6 282 18.4 281.8 17.6 281.2 C16.6 280.4 16.2 279.4 16 278.4 C15.6 276.6 15.8 275 15.2 274 C14.8 273.2 14.4 273 14 272.9 Z" fill="#b0b0b0"/>
<path d="M13.4 282.4 L23.4 272.5" stroke="#e4e4e4" stroke-width="0.9"/>
<circle cx="13.4" cy="282.4" r="1.3" fill="#3a3a3a" stroke="#e4e4e4" stroke-width="0.8"/>
<circle cx="23.4" cy="272.5" r="1.3" fill="#3a3a3a" stroke="#e4e4e4" stroke-width="0.8"/>
<circle cx="18" cy="278" r="1.9" fill="#3a3a3a" stroke="#f0f0f0" stroke-width="1"/>
<path d="M34.2 283.59999999999997 L34.2 287.2 L30.6 287.2 Z" fill="#d4d4d4"/>
<rect x="48.1" y="272.2" width="10" height="9.6" fill="none" stroke="#262626" stroke-width="1"/>
<rect x="48.1" y="272.2" width="10" height="9.6" fill="none" stroke="#d8d8d8" stroke-width="1" stroke-dasharray="1.2 1.3"/>
<rect x="47.2" y="271.3" width="1.8" height="1.8" fill="#dcdcdc"/>
<rect x="52.2" y="271.3" width="1.8" height="1.8" fill="#dcdcdc"/>
<rect x="57.2" y="271.3" width="1.8" height="1.8" fill="#dcdcdc"/>
<rect x="57.2" y="276.1" width="1.8" height="1.8" fill="#dcdcdc"/>
<rect x="57.2" y="280.90000000000003" width="1.8" height="1.8" fill="#dcdcdc"/>
<rect x="52.2" y="280.90000000000003" width="1.8" height="1.8" fill="#dcdcdc"/>
<rect x="47.2" y="280.90000000000003" width="1.8" height="1.8" fill="#dcdcdc"/>
<path d="M43 270 L43 281.2 L46.4 278.2 L51.2 277.2 Z" fill="#c2c2c2"/>
<circle cx="22" cy="299" r="5.8" fill="none" stroke="#a8a8a8" stroke-width="1.2"/>
<circle cx="16.1" cy="299.4" r="3.8" fill="#5a5a5a" fill-opacity="0.6" stroke="#b0b0b0" stroke-width="1.2"/>
<path d="M14 299.4 L23 299.4" stroke="#f4f4f4" stroke-width="1.1" stroke-dasharray="1 0.9"/>
<path d="M24 298.2 L24 309 L27 306.2 L31.6 305.4 Z" fill="#c4c4c4" stroke="#3a3a3a" stroke-width="0.5"/>
<path d="M34.2 307.59999999999997 L34.2 311.2 L30.6 311.2 Z" fill="#d4d4d4"/>
<path d="M43 292.8 L47.4 294.4 L47.4 300.2 L43 300.2 Z" fill="#c2c2c2"/>
<path d="M43 301.2 L47.4 301.2 L47.4 307 L43 307 Z" fill="#b6b6b6"/>
<path d="M48.4 294.8 L51.2 295.8 L51.2 300.2 L48.4 300.2 Z" fill="#b4b4b4"/>
<path d="M48.4 301.2 L51.2 301.2 L51.2 306 L48.4 306 Z" fill="#ababab"/>
<path d="M52.2 296.2 L54.2 296.9 L54.2 300.2 L52.2 300.2 Z" fill="#a8a8a8"/>
<path d="M52.2 301.2 L54.2 301.2 L54.2 304 L52.2 304 Z" fill="#a0a0a0"/>
<path d="M43 292.2 L54.6 296.3" stroke="#2a2a2a" stroke-width="1"/>
<path d="M55 304.6 L58 304.6 M52 306.4 L59 306.4 M43 308.4 L60 308.4" stroke="#c4c4c4" stroke-width="1.1"/>
<path d="M55 303.6 L58 303.6 M52 305.4 L59 305.4 M48 307.4 L60 307.4" stroke="#2e2e2e" stroke-width="0.8"/>
<path d="M64.2 307.59999999999997 L64.2 311.2 L60.6 311.2 Z" fill="#d4d4d4"/>
<rect x="6" y="313" width="60" height="1" fill="#343434"/>
<rect x="6" y="314" width="60" height="1" fill="#585858"/>
<rect x="13" y="320" width="16" height="1" fill="#2a2a2a"/>
<rect x="13.6" y="321.4" width="14.8" height="10.8" fill="#383838" stroke="#cccccc" stroke-width="1"/>
<path d="M14 326 C17 323.6 19 324 19.6 327 C20.2 329.4 19 331 18 332 M16 322 C19 322.4 24.6 322.4 25.4 327.2 C25.8 329.6 24.6 331.4 23.6 332.2 M14 330 C16 328.4 18 327.6 19.6 327 M19.6 327 C22 326.6 24 327 28.2 327 M24.8 321.4 C25 323.4 25.4 325 25.4 327.2 M19.6 327.4 C21 329 22.4 330.4 23.4 332 M14 323 C15.4 323.6 16.6 323.4 17.6 322" fill="none" stroke="#e2e2e2" stroke-width="0.9"/>
<rect x="43" y="320" width="16" height="1" fill="#2a2a2a"/>
<rect x="43.6" y="321.4" width="15" height="10.9" fill="url(#gg)" stroke="#cccccc" stroke-width="1"/>
<g transform="translate(14 357.8) rotate(45)"><path d="M0 -0.3 L-1.6 -3 L-1.6 -11.4 L1.6 -11.4 L1.6 -3 Z" fill="#333" stroke="#d6d6d6" stroke-width="1"/><rect x="-4" y="-14.6" width="8" height="3.4" fill="#a2a2a2"/><path d="M-2.2 -15 L-2.2 -18.2 A2.2 2.2 0 0 1 2.2 -18.2 L2.2 -15 Z" fill="#b4b4b4"/></g>
<path d="M34.2 357.59999999999997 L34.2 361.2 L30.6 361.2 Z" fill="#d4d4d4"/>
<rect x="42" y="342.2" width="9" height="1" fill="#2a2a2a"/>
<rect x="42" y="343.2" width="9" height="8.4" fill="#bebebe"/>
<rect x="46.6" y="345.6" width="8" height="8.6" rx="2" fill="#828282" stroke="#c0c0c0" stroke-width="1" />
<path d="M47 344.6 L54 344.6" stroke="#2a2a2a" stroke-width="1"/>
<circle cx="55.6" cy="353.2" r="4.1" fill="#4a4a4a" stroke="#cacaca" stroke-width="1.2"/>
<rect x="6" y="363" width="60" height="1" fill="#343434"/>
<rect x="6" y="364" width="60" height="1" fill="#585858"/>
<rect x="22" y="368.2" width="4" height="1" fill="#2a2a2a"/>
<rect x="22" y="369.2" width="4" height="3" fill="#c2c2c2"/>
<path d="M19.8 375 L21.6 373.2 L26.6 373.2 L28.4 375 L28.4 384.4 L19.8 384.4 Z" fill="#3a3a3a" stroke="#c2c2c2" stroke-width="1"/>
<circle cx="24" cy="378.9" r="2.1" fill="#2a2a2a" stroke="#e0e0e0" stroke-width="1.3"/>
<rect x="11.9" y="369.9" width="1.1" height="1.1" fill="#e2e2e2"/>
<rect x="13.9" y="368.9" width="1.1" height="1.1" fill="#e2e2e2"/>
<rect x="15.899999999999999" y="369.9" width="1.1" height="1.1" fill="#e2e2e2"/>
<rect x="17.9" y="368.9" width="1.1" height="1.1" fill="#e2e2e2"/>
<rect x="19.7" y="370.1" width="1.1" height="1.1" fill="#e2e2e2"/>
<rect x="12.9" y="371.7" width="1.1" height="1.1" fill="#e2e2e2"/>
<rect x="14.9" y="371.1" width="1.1" height="1.1" fill="#e2e2e2"/>
<rect x="16.9" y="371.7" width="1.1" height="1.1" fill="#e2e2e2"/>
<rect x="18.7" y="371.3" width="1.1" height="1.1" fill="#e2e2e2"/>
<rect x="13.9" y="373.3" width="1.1" height="1.1" fill="#e2e2e2"/>
<rect x="16.1" y="373.1" width="1.1" height="1.1" fill="#e2e2e2"/>
<path d="M34.2 383.59999999999997 L34.2 387.2 L30.6 387.2 Z" fill="#d4d4d4"/>
<rect x="43.5" y="375" width="4" height="9.4" fill="#828282" stroke="#c8c8c8" stroke-width="1"/>
<rect x="48" y="380.4" width="3" height="4" fill="#a8a8a8"/>
<rect x="51.4" y="369.2" width="4" height="15.2" fill="#c6c6c6"/>
<rect x="55.8" y="372.4" width="3" height="12" fill="#828282" stroke="#c8c8c8" stroke-width="1"/>
<rect x="42" y="384" width="18" height="1.1" fill="#d0d0d0"/>
<path d="M43 374 L48 374 M51.4 368.4 L55.4 368.4 M55.4 371.4 L59.4 371.4 M48 379.6 L51 379.6" stroke="#2a2a2a" stroke-width="1"/>
<path d="M64.2 383.59999999999997 L64.2 387.2 L60.6 387.2 Z" fill="#d4d4d4"/>
<rect x="6" y="389" width="60" height="1" fill="#343434"/>
<rect x="6" y="390" width="60" height="1" fill="#585858"/>
<rect x="15.6" y="398.6" width="11" height="9" fill="url(#rg)" stroke="#cccccc" stroke-width="1"/>
<path d="M15.5 394 L15.5 397 M26.5 394 L26.5 397 M15.5 409.2 L15.5 411.8 M26.5 409.2 L26.5 411.8 M11 398.5 L14 398.5 M28 398.5 L31 398.5 M11 407.5 L14 407.5 M28 407.5 L31 407.5" stroke="#e8e8e8" stroke-width="1"/>
<path d="M11 397.5 L14 397.5 M28 397.5 L31 397.5 M11 406.5 L14 406.5 M28 406.5 L31 406.5 M15 397.6 L27 397.6" stroke="#2a2a2a" stroke-width="0.9"/>
<path d="M43 409.6 L51.6 402 L53.4 402.8 L53 405.6 Z" fill="#c8c8c8"/>
<path d="M52.4 399.8 L55.4 396.8 L61 396.8 L55.6 402.6 L53.8 401.6 Z" fill="#9a9a9a"/>
<path d="M55 396 L61 396 M43 408.6 L52 400.6" stroke="#2a2a2a" stroke-width="0.9"/>
<path d="M64.2 409.59999999999997 L64.2 413.2 L60.6 413.2 Z" fill="#d4d4d4"/>
<path d="M17.6 434.8 L17 432 C15.6 429.6 13.8 427.8 12.4 426.4 C12.2 425.2 13.6 425 14.6 425.6 L17 428 L15.8 421.4 C15.8 420 17.6 419.8 18 421.2 L19.2 425.6 L19.6 420 C19.8 418.4 21.6 418.4 21.8 420 L22 425.4 L23.2 420.8 C23.6 419.4 25.4 419.8 25.2 421.2 L24.6 426.6 L26.8 423.4 C27.6 422.4 29.2 423.2 28.6 424.6 C27.6 427.4 26.6 429.6 25.8 432 L25.8 434.8 Z" fill="#bababa"/>
<path d="M34.2 433.59999999999997 L34.2 437.2 L30.6 437.2 Z" fill="#d4d4d4"/>
<path d="M53 428 L58.4 433" stroke="#c0c0c0" stroke-width="2.6" stroke-linecap="round"/>
<circle cx="49.5" cy="424.3" r="5" fill="#828282" stroke="#c4c4c4" stroke-width="1.3"/>
<path d="M45 420.6 A5.6 5.6 0 0 1 54 420.6" fill="none" stroke="#2a2a2a" stroke-width="0.9"/>
<rect x="6" y="439" width="60" height="1" fill="#3a3a3a"/>
<rect x="6" y="440" width="60" height="1" fill="#5c5c5c"/>
<rect x="24" y="461" width="36" height="36" fill="#262626"/>
<path d="M25 462 L59 462 L59 496 L25 496 Z M34 471 L34 487 L50 487 L50 471 Z" fill="#ffffff" fill-rule="evenodd"/>
<rect x="34" y="471" width="16" height="16" fill="#2a2a2a"/><rect x="35.2" y="472.2" width="14.8" height="14.8" fill="#4a4a4a"/>
<path d="M25.4 495.6 L58.8 462.2" stroke="#ff0000" stroke-width="2.2"/>
<rect x="6" y="443" width="36" height="36" fill="#262626"/>
<rect x="7" y="444" width="34" height="34" fill="#ffffff"/>
<rect x="8" y="445" width="32" height="32" fill="#ee2429"/>
<path d="M52.6 446.8 C56.2 446.4 57.7 448.2 57.7 451" fill="none" stroke="#cccccc" stroke-width="1.1"/>
<path d="M50 446.9 L53.6 444.3 L53.6 449.5 Z" fill="#cccccc"/>
<path d="M55 450.6 L60.4 450.6 L57.7 454 Z" fill="#cccccc"/>
<rect x="6.5" y="484.8" width="8" height="8.6" fill="none" stroke="#6a6a6a" stroke-width="1"/>
<rect x="10.8" y="489.6" width="6.4" height="6.6" fill="#0c0c0c" stroke="#c8c8c8" stroke-width="1"/>
<rect x="11.8" y="490.8" width="4.2" height="4.2" fill="none" stroke="#0c0c0c" stroke-width="1.6"/>
<rect x="12.8" y="491.8" width="2.4" height="2.4" fill="#4a4a4a"/>
<rect x="7.6" y="486.4" width="6" height="6.4" fill="#e8e8e8" stroke="#161616" stroke-width="1"/>
<rect x="7" y="504" width="59" height="19" fill="#323232"/>
<rect x="8" y="505" width="19" height="17" fill="#303030"/>
<rect x="27.4" y="505" width="19" height="17" fill="#5a5a5a"/>
<rect x="46.8" y="505" width="18.4" height="17" fill="#5a5a5a"/>
<rect x="11.5" y="507.5" width="12" height="12" fill="#ee2429" stroke="#0a0a0a" stroke-width="1"/>
<rect x="30.5" y="507.5" width="12" height="12" fill="url(#wg)" stroke="#0a0a0a" stroke-width="1"/>
<rect x="49.5" y="507.5" width="12" height="12" fill="#ffffff" stroke="#0a0a0a" stroke-width="1"/>
<clipPath id="nc"><rect x="50" y="508" width="11" height="11"/></clipPath>
<path d="M50 519 L61 508" stroke="#ff0000" stroke-width="3.4" clip-path="url(#nc)"/>
<rect x="7" y="529" width="59" height="17" fill="#323232"/>
<rect x="8" y="530" width="19" height="15" fill="#303030"/>
<rect x="27.4" y="530" width="19" height="15" fill="#5a5a5a"/>
<rect x="46.8" y="530" width="18.4" height="15" fill="#585858"/>
<circle cx="16.6" cy="536.2" r="3.5" fill="none" stroke="#b8b8b8" stroke-width="1.1"/>
<rect x="17.4" y="537.4" width="5.4" height="5.4" fill="#c2c2c2" stroke="#303030" stroke-width="0.6"/>
<rect x="37.2" y="537.6" width="4.8" height="5.2" fill="#bcbcbc"/>
<circle cx="36" cy="536.4" r="4" fill="#5a5a5a" stroke="#c0c0c0" stroke-width="1.1"/>
<circle cx="55.2" cy="536.6" r="3.8" fill="none" stroke="#747474" stroke-width="1.1"/>
<path d="M55.4 536.8 L58.4 536.8 L55.4 539.8 Z" fill="#747474"/>
<rect x="24.6" y="559.6" width="14" height="10.8" fill="#585858" stroke="#cfcfcf" stroke-width="1.1"/>
<rect x="30" y="554.2" width="15" height="1" fill="#2a2a2a"/>
<rect x="30.6" y="555.8" width="14" height="10.6" fill="#727272" stroke="#d4d4d4" stroke-width="1.1"/>
<rect x="31.2" y="556.4" width="12.8" height="1.6" fill="#8a8a8a"/>
</svg>
</body>
</html>
